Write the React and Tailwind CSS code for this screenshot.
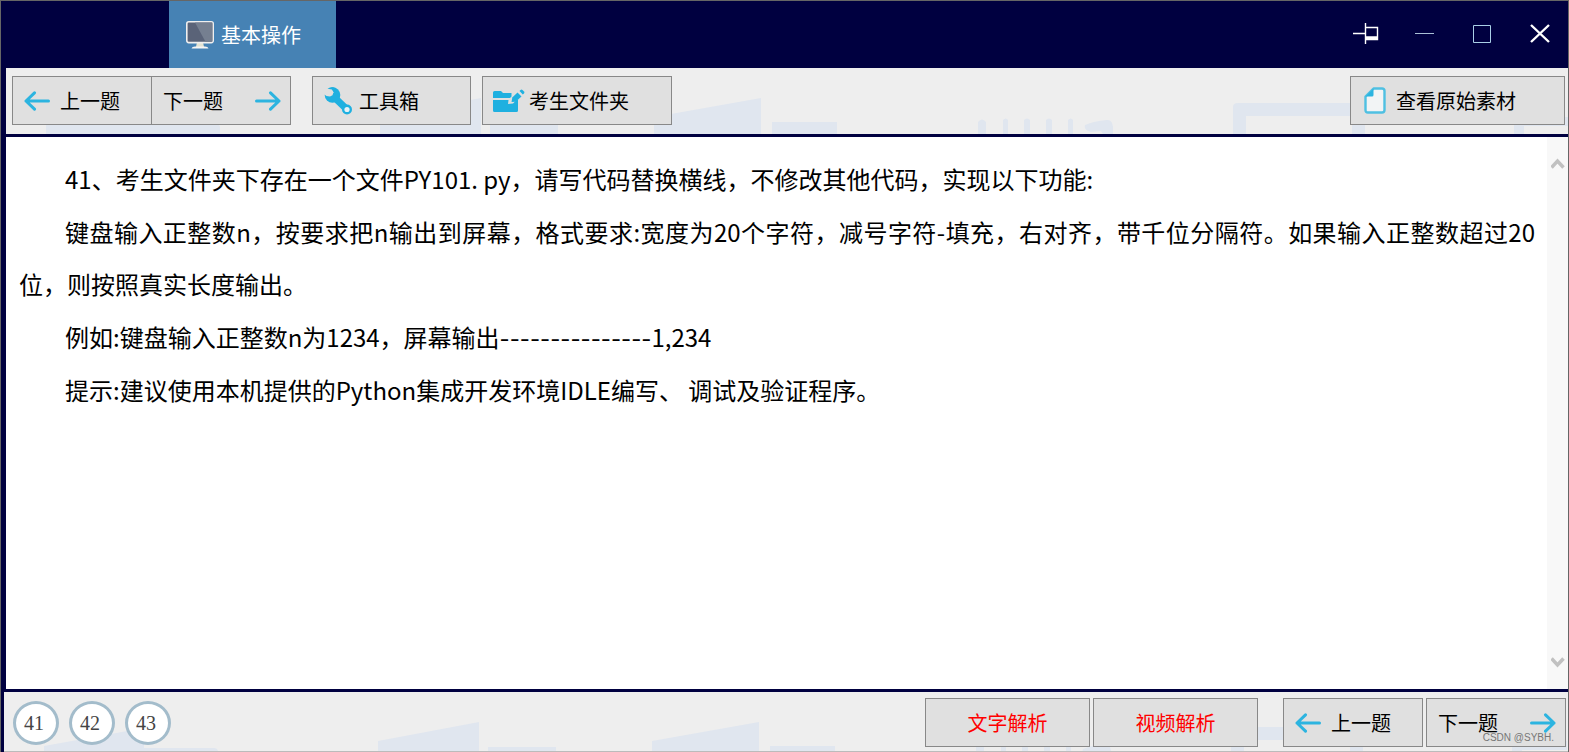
import React from 'react';

const ToolButton = ({ children, className = '' }) => (
  <button
    type="button"
    className={`flex h-[49px] shrink-0 items-center border border-[#888] bg-[#e0e0e0] text-xl leading-none whitespace-nowrap ${className}`}
  >
    {children}
  </button>
);

const ArrowIcon = ({ className = '' }) => (
  <svg viewBox="0 0 26 20" className={`h-5 w-[26px] shrink-0 ${className}`} fill="none" stroke="#2cb4e0" strokeWidth="3" strokeLinecap="round" strokeLinejoin="round">
    <path d="M24.5 10H2M10.5 1.8 2 10l8.5 8.2" />
  </svg>
);

const WrenchIcon = () => (
  <svg viewBox="0 0 28 28" className="h-7 w-7 shrink-0" fill="none">
    <circle cx="8.500" cy="8" r="7.800" fill="#1fb0e0" />
    <path d="M10 10l13 12.500" stroke="#1fb0e0" strokeWidth="7" />
    <circle cx="23" cy="22.500" r="5" fill="#1fb0e0" />
    <circle cx="23" cy="22.500" r="2.600" fill="#e8f2f6" />
    <path d="M-1 6.500-1-1h6l3 2.500 1.500 3.700-1 3L6 9.500 2.500 9z" fill="#e0e0e0" />
    <path d="M3.500 1.800Q7-.3 10.500.6L9.500 5 8 2.600z" fill="#1fb0e0" />
  </svg>
);

const FolderEditIcon = () => (
  <svg viewBox="0 0 32 24" className="h-6 w-8 shrink-0" fill="#1fb0e0">
    <path d="M0 3.500Q0 2 1.500 2H8l2 2h8.500v3.500L17 9H0z" />
    <path d="M0 11h15.500l-.5 4 5-.5 3.500-3.500H25v10.500q0 1.500-1.500 1.500h-22Q0 23 0 21.500z" />
    <path d="m18.500 13 .8-4.500 5.200-5 4 4-5.800 5.300z" />
    <path d="m26.500 2 1-1q1-.9 2 0l1.500 1.500q.9 1 0 1.900L29.800 5.500z" />
  </svg>
);

const DocumentIcon = () => (
  <svg viewBox="0 0 22 27" className="h-[27px] w-[22px] shrink-0">
    <path d="M9.500 1.500H18q2.500 0 2.500 2.500v19q0 2.500-2.500 2.500H4Q1.500 25.500 1.500 23V9.500z" fill="#f2f4f5" stroke="#4fc0e2" strokeWidth="2.400" strokeLinejoin="round" />
    <path d="M9.500 1.500v6.500q0 1.500-1.500 1.500H1.500z" fill="#2cb4e0" />
  </svg>
);

const MonitorIcon = () => (
  <svg viewBox="0 0 28 28" className="h-7 w-7 shrink-0">
    <path d="M11 21h6l1 5h-8z" fill="#e3e3d3" />
    <path d="M5.500 27.500Q6 25.500 9 25.500h10q3 0 3.500 2z" fill="#f5f5f5" />
    <rect x=".8" y=".8" width="26.400" height="20.800" rx="2" fill="#5a6378" stroke="#efefef" strokeWidth="1.600" />
    <path d="M9 1.600h17.400v19.200H19.500z" fill="#757f90" />
  </svg>
);

// Faint shapes behind the toolbars
const Backdrop = () => (
  <svg aria-hidden="true" viewBox="0 0 1563 66" className="pointer-events-none absolute top-0 left-0 h-[66px] w-[1563px]" fill="#e0e6ef">
    <path d="M40 54l100-18v20h70q4 0 4 4v6H40z" />
    <path d="M374 49l101-19v36H374zM484 55h68v11h-68zM648 49l107-19v36H648zM766 54h65v12h-65z" />
    <path d="M972 54q4-5 8 0v12h-8zM997 52q3-3 5 0v14h-5zM1018 52q3-3 6 0v14h-6zM1040 52q3-3 6 0v14h-6zM1062 52q3-3 5 0v14h-5z" />
    <path d="M1079 57q9-4 22-5 5-1 6 7v7h-10l-2-3-10 1q-8-2-6-7z" />
    <path d="M1227 39q0-4 5-4h122q5 0 5 4v27h-13V48H1240v18h-13z" />
    <path d="M1508 66V55q0-3 4-4l40-2h11v9h-45v8z" />
  </svg>
);

const App = () => (
  <div className="flex min-h-screen flex-col border-t border-r border-l border-[#666] bg-[#000040] font-['Noto_Sans_CJK_SC',sans-serif] text-black">
    {/* Title bar */}
    <header className="flex h-[67px] items-stretch justify-between">
      <div className="ml-[168px] flex w-[167px] items-center gap-[7px] bg-[#4682b4] pl-[17px] text-xl leading-none text-white">
        <MonitorIcon />
        <h1>基本操作</h1>
      </div>
      <div className="flex items-center gap-[30px] pr-[14px] pb-1 text-white">
        <button type="button" aria-label="固定">
          <svg viewBox="0 0 28 24" className="h-6 w-7" fill="none" stroke="currentColor">
            <path d="M1 12.500h12M13.500 2v21M13.500 6.500h12v12h-12" strokeWidth="1.400" />
            <path d="M14 17h12" strokeWidth="3.500" />
          </svg>
        </button>
        <button type="button" aria-label="最小化">
          <svg viewBox="0 0 28 24" className="h-6 w-7" stroke="#a9bfd6"><path d="M5 12.500h19" /></svg>
        </button>
        <button type="button" aria-label="最大化">
          <svg viewBox="0 0 28 24" className="h-6 w-7" fill="none" stroke="#a9cfe6"><path d="M5.500 4.500h17v17h-17z" /></svg>
        </button>
        <button type="button" aria-label="关闭">
          <svg viewBox="0 0 28 24" className="h-6 w-7" stroke="currentColor" strokeWidth="2.400"><path d="m5 4 18 17M23 4 5 21" /></svg>
        </button>
      </div>
    </header>

    {/* Toolbar */}
    <nav className="relative ml-[5px] flex h-[66px] items-start overflow-hidden bg-[#eee] pt-2 pr-[3px] pl-[6px]">
      <Backdrop />
      <div className="relative flex w-full items-center">
        <ToolButton className="w-[140px] gap-[10px] pl-[11px]"><ArrowIcon />上一题</ToolButton>
        <ToolButton className="-ml-px w-[140px] justify-between pr-[9px] pl-[11px]">下一题<ArrowIcon className="rotate-180" /></ToolButton>
        <ToolButton className="ml-[21px] w-[159px] gap-[7px] pl-[11px]"><WrenchIcon />工具箱</ToolButton>
        <ToolButton className="ml-[11px] w-[190px] gap-1 pl-[10px]"><FolderEditIcon />考生文件夹</ToolButton>
        <ToolButton className="ml-auto w-[215px] gap-[10px] pl-[13px]"><DocumentIcon />查看原始素材</ToolButton>
      </div>
    </nav>

    {/* Question */}
    <main className="mt-[3px] ml-[5px] flex flex-1 bg-white">
      <article className="flex flex-1 flex-col gap-px pt-4 pr-3 pl-[13px] text-justify text-2xl leading-[52px]">
        <p className="indent-[46px]">41、考生文件夹下存在一个文件PY101. py，请写代码替换横线，不修改其他代码，实现以下功能:</p>
        <p className="indent-[46px]">键盘输入正整数n，按要求把n输出到屏幕，格式要求:宽度为20个字符，减号字符-填充，右对齐，带千位分隔符。如果输入正整数超过20位，则按照真实长度输出。</p>
        <p className="indent-[46px]">例如:键盘输入正整数n为1234，屏幕输出<span className="font-['Inter',sans-serif] text-[22px] leading-none">---------------</span>1,234</p>
        <p className="indent-[46px]">提示:建议使用本机提供的Python集成开发环境IDLE编写、 调试及验证程序。</p>
      </article>
      <div className="flex w-[21px] flex-col items-center justify-between bg-[#f8f8f8] pt-[21px] pb-[21px]">
        <svg viewBox="0 0 14 11" className="h-[11px] w-[14px]" fill="none" stroke="#c1c1c1" strokeWidth="3.500"><path d="m.5 9.500 6-6.500 6 6.500" /></svg>
        <svg viewBox="0 0 14 11" className="h-[11px] w-[14px]" fill="none" stroke="#c1c1c1" strokeWidth="3.500"><path d="m.5 1.500 6 6.500 6-6.500" /></svg>
      </div>
    </main>

    {/* Bottom bar */}
    <footer className="relative mt-[3px] ml-[3px] flex h-[60px] items-start overflow-hidden border-b border-[#bbb] bg-[#eee] pt-[6px] pr-[2px] pl-[9px]">
      <Backdrop />
      <div className="relative flex gap-[10px] pt-[3px]">
        {[41, 42, 43].map((n) => (
          <button key={n} type="button" className="flex h-11 w-[46px] items-center justify-center rounded-[50%] border-3 border-[#a3bccb] bg-white pr-1 font-['Liberation_Serif',serif] text-xl leading-none text-[#444]">
            {n}
          </button>
        ))}
      </div>
      <div className="relative ml-auto flex">
        <ToolButton className="w-[165px] justify-center text-[#ff0000]">文字解析</ToolButton>
        <ToolButton className="ml-[3px] w-[165px] justify-center text-[#ff0000]">视频解析</ToolButton>
        <ToolButton className="ml-[25px] w-[140px] gap-[10px] pl-[11px]"><ArrowIcon />上一题</ToolButton>
        <ToolButton className="ml-[3px] w-[140px] justify-between pr-[9px] pl-[11px]">下一题<ArrowIcon className="rotate-180" /></ToolButton>
      </div>
      <span className="absolute right-[14px] bottom-[7px] font-['Liberation_Sans',sans-serif] text-[10px] leading-3 text-[#777]">CSDN @SYBH.</span>
    </footer>
  </div>
);

export default App;
